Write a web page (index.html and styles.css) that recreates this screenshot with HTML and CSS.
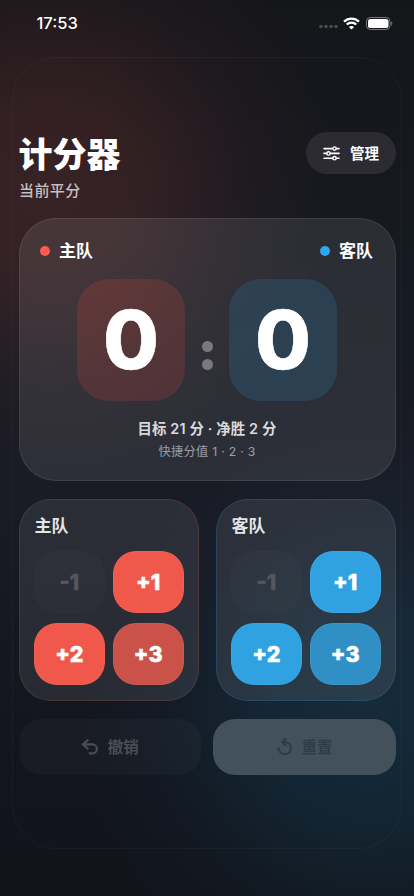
FILE: index.html
```html
<!DOCTYPE html>
<html lang="zh-CN">
<head>
<meta charset="utf-8">
<meta name="viewport" content="width=device-width, initial-scale=1">
<title>计分器</title>
<link rel="stylesheet" href="styles.css">
</head>
<body>
<div class="status">
  <span class="time">17:53</span>
  <div class="status-icons">
    <svg width="19" height="5" viewBox="0 0 19 5" fill="#4b4c51"><circle cx="2" cy="2.5" r="1.8"/><circle cx="7" cy="2.5" r="1.8"/><circle cx="12" cy="2.5" r="1.8"/><circle cx="17" cy="2.5" r="1.8"/></svg>
    <svg class="wifi" width="17" height="13" viewBox="0 0 17 13" fill="none" stroke="#fff" stroke-width="2.3"><path d="M1 4.6C5.2.5 11.8.5 16 4.6"/><path d="M3.7 7.5c2.7-2.5 6.9-2.5 9.6 0"/><path d="M8.5 12.6 5.9 9.9c1.4-1.3 3.8-1.3 5.2 0z" fill="#fff" stroke="none"/></svg>
    <svg class="battery" width="27" height="13" viewBox="0 0 27 13"><rect x=".5" y=".5" width="23.5" height="12" rx="3.8" fill="none" stroke="#77787b"/><rect x="2" y="2" width="20.5" height="9" rx="2.6" fill="#fff"/><path d="M25.2 4.4c1.5.5 1.5 3.7 0 4.2z" fill="#77787b"/></svg>
  </div>
</div>
<main class="frame">
  <header class="header">
    <div>
      <h1>计分器</h1>
      <p class="subtitle">当前平分</p>
    </div>
    <button class="manage">
      <svg width="17" height="15" viewBox="0 0 17 15" fill="none" stroke="#fff" stroke-width="1.6" stroke-linecap="round"><path d="M1 2.6h8.6M13.4 2.6H16M1 7.4h2.6M7.4 7.4H16M1 12.2h8.6M13.4 12.2H16"/><circle cx="11.5" cy="2.6" r="1.7" stroke-width="1.4"/><circle cx="5.5" cy="7.4" r="1.7" stroke-width="1.4"/><circle cx="11.5" cy="12.2" r="1.7" stroke-width="1.4"/></svg>
      <span>管理</span>
    </button>
  </header>

  <section class="board">
    <div class="teams">
      <div class="team"><i class="dot red"></i>主队</div>
      <div class="team"><i class="dot blue"></i>客队</div>
    </div>
    <div class="scores">
      <div class="score home">0</div>
      <div class="colon"><i></i><i></i></div>
      <div class="score away">0</div>
    </div>
    <p class="target">目标 21 分 · 净胜 2 分</p>
    <p class="quick">快捷分值 1 · 2 · 3</p>
  </section>

  <section class="panels">
    <div class="panel home-panel">
      <h2>主队</h2>
      <div class="keys">
        <button class="key minus">-1</button>
        <button class="key">+1</button>
        <button class="key">+2</button>
        <button class="key dim">+3</button>
      </div>
    </div>
    <div class="panel away-panel">
      <h2>客队</h2>
      <div class="keys">
        <button class="key minus">-1</button>
        <button class="key">+1</button>
        <button class="key">+2</button>
        <button class="key dim">+3</button>
      </div>
    </div>
  </section>

  <footer class="actions">
    <button class="action undo">
      <svg width="18" height="16" viewBox="0 0 18 16" fill="none" stroke="currentColor" stroke-width="2.2" stroke-linecap="round" stroke-linejoin="round"><path d="M6.7 1.2 2 5.4l4.7 4.2M2.4 5.4h9a4.5 4.5 0 0 1 0 9H8.6"/></svg>
      <span>撤销</span>
    </button>
    <button class="action reset">
      <svg width="16" height="18" viewBox="0 0 16 18" fill="none" stroke="currentColor" stroke-width="2.1" stroke-linecap="round" stroke-linejoin="round"><path d="M1.6 10.2A6.2 6.2 0 1 0 7.8 4H5.6M8.3 1 5.2 4l3.1 3.2"/></svg>
      <span>重置</span>
    </button>
  </footer>
</main>
</body>
</html>
```
FILE: styles.css
```css
* { box-sizing: border-box; }

body {
  margin: 0;
  width: 414px;
  height: 896px;
  overflow: hidden;
  color: #fff;
  font-family: Inter, "Noto Sans CJK SC", sans-serif;
  background:
    radial-gradient(circle 290px at 50px 190px, rgba(255, 90, 75, .15), rgba(255, 90, 75, .125) 30%, rgba(255, 90, 75, .035) 70%, transparent),
    radial-gradient(circle 290px at 370px 715px, rgba(30, 150, 205, .16), rgba(30, 150, 205, .125) 35%, rgba(30, 150, 205, .035) 72%, transparent),
    linear-gradient(#15161a, #161a22 35%, #191b25 55%, #12151d 85%, #11141b);
}

h1, h2, p { margin: 0; }

button {
  padding: 0;
  border: 0;
  color: inherit;
  font-family: inherit;
  display: flex;
  align-items: center;
  justify-content: center;
}

.status {
  height: 57px;
  padding: 13px 21px 24px 36.5px;
  display: flex;
  align-items: center;
  justify-content: space-between;
}

.time { font-size: 16.5px; font-weight: 550; line-height: 20px; }
.status-icons { display: flex; align-items: center; }
.status-icons svg:first-child { margin-top: 7px; }
.wifi { margin-left: 5px; }
.battery { margin-left: 6px; }

.frame {
  height: 792px;
  margin: 0 12.5px 0 12px;
  padding: 74px 4.5px 0 5.5px;
  border: 1px solid rgba(255, 255, 255, .035);
  border-radius: 44px;
}

.header {
  height: 86px;
  display: flex;
  justify-content: space-between;
  align-items: flex-start;
}

h1 { font-size: 34px; line-height: 42px; font-weight: 900; padding-top: 2px; }
.subtitle { font-size: 15px; font-weight: 500; line-height: 22px; letter-spacing: .4px; color: rgba(255, 255, 255, .72); margin-top: 4px; padding-left: .5px; }

.manage {
  width: 90px;
  height: 42px;
  border-radius: 21px;
  gap: 10px;
  background: #2b2b31;
  font-size: 14.5px;
  font-weight: 700;
}
.manage span { position: relative; top: -1px; }

.board {
  height: 263px;
  border: 1px solid rgba(255, 255, 255, .09);
  border-radius: 37px;
  padding: 20px 22px 0 20.5px;
  background: rgba(255, 255, 255, .09);
}

.teams { display: flex; justify-content: space-between; height: 24px; }
.team { display: flex; align-items: center; gap: 9px; font-size: 17px; font-weight: 700; line-height: 24px; }
.dot { width: 10px; height: 10px; border-radius: 50%; }
.red { background: #ff5b4d; }
.blue { background: #2da8f0; }

.scores { display: flex; justify-content: center; gap: 16px; margin: 16px -1px 0 0; }

.score {
  width: 108px;
  height: 122px;
  border-radius: 32px;
  display: flex;
  align-items: center;
  justify-content: center;
  font-size: 81px;
  font-weight: 850;
  -webkit-text-stroke: .5px #fff;
}

.home { background: linear-gradient(135deg, rgba(255, 75, 50, .16), rgba(255, 75, 70, .15)); }
.away { background: rgba(45, 168, 240, .15); }

.colon { width: 12px; display: flex; flex-direction: column; justify-content: center; gap: 6.5px; padding-top: 31px; }
.colon i { width: 11px; height: 11px; border-radius: 50%; background: #7b787d; margin-left: .5px; }

.target { margin: 18px 0 0 1px; text-align: center; font-size: 14.4px; line-height: 20px; font-weight: 600; letter-spacing: .15px; color: rgba(255, 255, 255, .84); }
.quick { margin: 4px 0 0 1px; text-align: center; font-size: 12.2px; line-height: 18px; letter-spacing: .3px; color: rgba(255, 255, 255, .54); }

.panels { display: grid; grid-template-columns: 1fr 1fr; gap: 16.5px; margin-top: 18px; }

.panel { height: 202px; padding: 15px 14.5px 0; border: 1px solid; border-radius: 32px; background: rgba(255, 255, 255, .085); }
.home-panel { border-color: rgba(255, 91, 77, .18); --team: #f0584b; --soft: #cb5248; }
.away-panel { border-color: rgba(45, 168, 240, .19); --team: #30a1e1; --soft: #3090c6; }

h2 { font-size: 17px; font-weight: 700; line-height: 22px; color: rgba(255, 255, 255, .88); padding-left: .5px; }

.keys { display: grid; grid-template-columns: 1fr 1fr; gap: 10px 8px; margin-top: 14px; }
.key { height: 62px; border-radius: 23px; background: var(--team); border: 1px solid rgba(255, 255, 255, .05); font-size: 21.5px; font-weight: 800; -webkit-text-stroke: .5px currentColor; }
.dim { background: var(--soft); }
.minus { background: rgba(255, 255, 255, .016); border-color: rgba(255, 255, 255, .008); color: #54575d; }

.actions { display: grid; grid-template-columns: 1fr 1fr; gap: 12px; margin-top: 18px; }
.action { height: 56px; border-radius: 22px; gap: 9px; font-size: 15.5px; font-weight: 700; }
.action span { position: relative; top: -1px; }
.undo { background: rgba(255, 255, 255, .026); color: #4a4d52; }
.reset { background: #43515c; color: #303d47; }
```
